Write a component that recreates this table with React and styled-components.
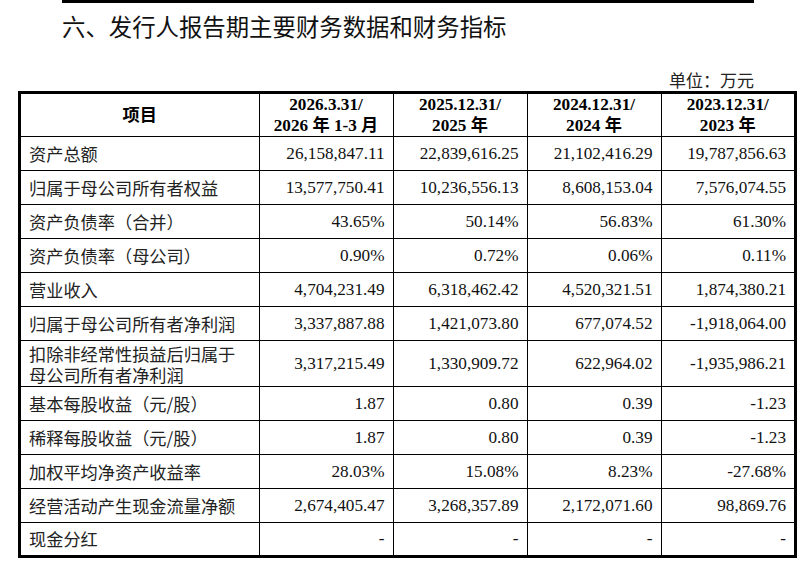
import styled, { createGlobalStyle } from "styled-components";

const GlobalStyle = createGlobalStyle`
  html, body {
    margin: 0;
    padding: 0;
    background: #fff;
  }
  body {
    font-family: "Liberation Serif", "Noto Sans CJK SC", serif;
    color: #000;
  }
`;

const rows = [
  { label: "资产总额", values: ["26,158,847.11", "22,839,616.25", "21,102,416.29", "19,787,856.63"] },
  { label: "归属于母公司所有者权益", values: ["13,577,750.41", "10,236,556.13", "8,608,153.04", "7,576,074.55"] },
  { label: "资产负债率（合并）", values: ["43.65%", "50.14%", "56.83%", "61.30%"] },
  { label: "资产负债率（母公司）", values: ["0.90%", "0.72%", "0.06%", "0.11%"] },
  { label: "营业收入", values: ["4,704,231.49", "6,318,462.42", "4,520,321.51", "1,874,380.21"] },
  { label: "归属于母公司所有者净利润", values: ["3,337,887.88", "1,421,073.80", "677,074.52", "-1,918,064.00"] },
  { label: ["扣除非经常性损益后归属于", "母公司所有者净利润"], values: ["3,317,215.49", "1,330,909.72", "622,964.02", "-1,935,986.21"], tall: true },
  { label: "基本每股收益（元/股）", values: ["1.87", "0.80", "0.39", "-1.23"] },
  { label: "稀释每股收益（元/股）", values: ["1.87", "0.80", "0.39", "-1.23"] },
  { label: "加权平均净资产收益率", values: ["28.03%", "15.08%", "8.23%", "-27.68%"] },
  { label: "经营活动产生现金流量净额", values: ["2,674,405.47", "3,268,357.89", "2,172,071.60", "98,869.76"] },
  { label: "现金分红", values: ["-", "-", "-", "-"], last: true },
];

const periods = [
  ["2026.3.31/", "2026 年 1-3 月"],
  ["2025.12.31/", "2025 年"],
  ["2024.12.31/", "2024 年"],
  ["2023.12.31/", "2023 年"],
];

const App = () => {
  return (
    <Page>
      <GlobalStyle />
      <TopRule />
      <Title>六、发行人报告期主要财务数据和财务指标</Title>
      <Unit>单位：万元</Unit>
      <Frame>
        <Table>
          <colgroup>
            <col style={{ width: 238 }} />
            <col style={{ width: 134 }} />
            <col style={{ width: 134 }} />
            <col style={{ width: 134 }} />
            <col />
          </colgroup>
          <thead>
            <Row $h={42}>
              <HeadCell>项目</HeadCell>
              {periods.map((p, i) => (
                <HeadCell key={i}>
                  {p[0]}
                  <br />
                  {p[1]}
                </HeadCell>
              ))}
            </Row>
          </thead>
          <tbody>
            {rows.map((r, i) => (
              <Row key={i} $h={r.tall ? 46 : r.last ? 32 : 34}>
                <LabelCell>
                  {Array.isArray(r.label) ? (
                    <>
                      {r.label[0]}
                      <br />
                      {r.label[1]}
                    </>
                  ) : (
                    r.label
                  )}
                </LabelCell>
                {r.values.map((v, j) => (
                  <NumCell key={j}>{v}</NumCell>
                ))}
              </Row>
            ))}
          </tbody>
        </Table>
      </Frame>
    </Page>
  );
};

export default App;

const Page = styled.div`
  width: 812px;
  height: 570px;
  overflow: hidden;
`;

const TopRule = styled.div`
  margin-left: 62px;
  width: 692px;
  height: 3px;
  background: #000;
`;

const Title = styled.h1`
  margin: 9px 0 0 62px;
  font-family: "Noto Sans CJK SC", sans-serif;
  font-weight: 400;
  font-size: 23.4px;
  line-height: 28px;
  color: #111;
`;

const Unit = styled.div`
  width: 754px;
  margin-top: 30px;
  text-align: right;
  font-family: "Noto Sans CJK SC", sans-serif;
  font-size: 17px;
  line-height: 20px;
  color: #222;
`;

const Frame = styled.div`
  box-sizing: border-box;
  margin: 1px 0 0 18px;
  width: 779px;
  border: 3px solid #000;
`;

const Table = styled.table`
  width: 100%;
  table-layout: fixed;
  border-collapse: collapse;
  font-family: "Liberation Serif", "Noto Sans CJK SC", serif;
  font-size: 17.2px;
  color: #111;

  td, th {
    border: 1px solid #000;
    padding: 0 8px;
    vertical-align: middle;
  }
  tr > *:first-child {
    border-left: none;
  }
  tr > *:last-child {
    border-right: none;
  }
  thead tr > * {
    border-top: none;
  }
  tbody tr:last-child > * {
    border-bottom: none;
  }
`;

const Row = styled.tr`
  height: ${(p) => p.$h}px;
`;

const HeadCell = styled.th`
  text-align: center;
  font-weight: 700;
  line-height: 21px;
  color: #000;
`;

const LabelCell = styled.td`
  text-align: left;
  line-height: 21px;
  font-family: "Noto Sans CJK SC", sans-serif;
  font-size: 17.2px;
  color: #222;
`;

const NumCell = styled.td`
  text-align: right;
  line-height: 20px;
  white-space: nowrap;
`;
